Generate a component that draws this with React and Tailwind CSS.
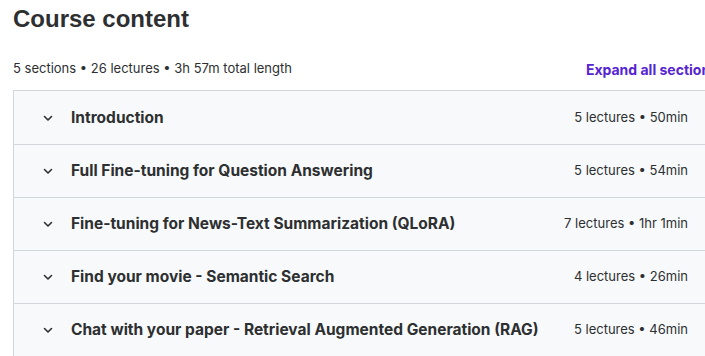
import React from "react";

const sections = [
  ["Introduction", "5 lectures • 50min"],
  ["Full Fine-tuning for Question Answering", "5 lectures • 54min"],
  ["Fine-tuning for News-Text Summarization (QLoRA)", "7 lectures • 1hr 1min"],
  ["Find your movie - Semantic Search", "4 lectures • 26min"],
  ["Chat with your paper - Retrieval Augmented Generation (RAG)", "5 lectures • 46min"],
];

function Chevron() {
  return (
    <svg width="12" height="12" viewBox="0 0 12 12" fill="none" className="shrink-0">
      <path d="M2.5 4.5 L6 8 L9.5 4.5" stroke="#2d2f31" strokeWidth="1.6" strokeLinecap="round" strokeLinejoin="round" />
    </svg>
  );
}

export default function App() {
  return (
    <div className="w-[705px] h-[356px] overflow-hidden bg-white text-[#2d2f31]" style={{ fontFamily: "Inter, 'Noto Sans', sans-serif" }}>
      <div className="w-[720px] pl-[13px]">
        <h2 className="text-[24px] font-bold leading-[38px]" style={{ fontFamily: "'Liberation Sans', Arial, sans-serif" }}>Course content</h2>
        <div className="flex items-center justify-between mt-[17px] h-[28px]">
          <span className="text-[13px] text-[#2d2f31]">5 sections • 26 lectures • 3h 57m total length</span>
          <span className="text-[14px] font-bold text-[#5624d0] whitespace-nowrap pr-[2px]">Expand all sections</span>
        </div>
        <div className="mt-[7px] border border-[#d1d7dc] border-r-0">
          {sections.map(([title, meta], i) => (
            <div key={i} className={`flex items-center h-[53px] bg-[#f7f9fa] pl-[28px] pr-[32px] ${i > 0 ? "border-t border-[#d1d7dc]" : ""}`}>
              <Chevron />
              <span className="ml-[17px] text-[15.5px] font-bold">{title}</span>
              <span className="ml-auto text-[13px]">{meta}</span>
            </div>
          ))}
        </div>
      </div>
    </div>
  );
}
